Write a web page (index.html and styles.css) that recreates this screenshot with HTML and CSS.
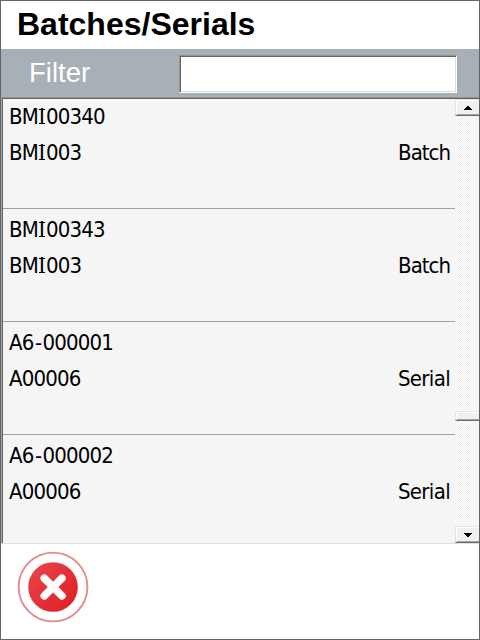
FILE: index.html
```html
<!DOCTYPE html>
<html lang="en">
<head>
<meta charset="utf-8">
<title>Batches/Serials</title>
<link rel="stylesheet" href="styles.css">
</head>
<body>
<main class="window">
  <h1 class="title">Batches/Serials</h1>
  <div class="filter">
    <label class="filter-label" for="filter">Filter</label>
    <input class="filter-input" id="filter" type="text">
  </div>
  <section class="list">
    <div class="rows">
      <article class="row">
        <div class="code">BM<span class="cap-i">I</span>00340</div>
        <div class="line"><span>BM<span class="cap-i">I</span>003</span><span class="kind batch">Batch</span></div>
      </article>
      <article class="row">
        <div class="code">BM<span class="cap-i">I</span>00343</div>
        <div class="line"><span>BM<span class="cap-i">I</span>003</span><span class="kind batch">Batch</span></div>
      </article>
      <article class="row">
        <div class="code">A6<span class="dash">-</span>000001</div>
        <div class="line"><span>A00006</span><span class="kind">Serial</span></div>
      </article>
      <article class="row">
        <div class="code">A6<span class="dash">-</span>000002</div>
        <div class="line"><span>A00006</span><span class="kind">Serial</span></div>
      </article>
    </div>
    <div class="scrollbar">
      <div class="arrow"><svg width="8" height="4" viewBox="0 0 8 4" shape-rendering="crispEdges"><path d="M3 0h2v1h1v1h1v1h1v1H0V3h1V2h1V1h1z"/></svg></div>
      <div class="track-above"></div>
      <div class="thumb"></div>
      <div class="track-below"></div>
      <div class="arrow"><svg width="8" height="4" viewBox="0 0 8 4" shape-rendering="crispEdges"><path d="M0 0h8v1H7v1H6v1H5v1H3V3H2V2H1V1H0z"/></svg></div>
    </div>
  </section>
  <footer class="actions">
    <button class="cancel" aria-label="Cancel">
      <svg width="72" height="72" viewBox="0 0 72 72">
        <defs>
          <linearGradient id="red" x1="0" y1="0" x2="1" y2="1">
            <stop offset="0" stop-color="#e9484b"/>
            <stop offset="1" stop-color="#de1b24"/>
          </linearGradient>
        </defs>
        <circle cx="36" cy="36" r="34.4" fill="#fff" stroke="#e48a8e" stroke-width="1.9"/>
        <circle cx="36" cy="36" r="24.8" fill="url(#red)"/>
        <path d="M27.3 27.3 44.9 44.9M44.9 27.3 27.3 44.9" stroke="#fff" stroke-width="7.6" stroke-linecap="round"/>
      </svg>
    </button>
  </footer>
</main>
</body>
</html>
```

FILE: styles.css
```css
* { box-sizing: border-box; }
body { margin: 0; background: #fff; }
.window {
  display: flex;
  flex-direction: column;
  width: 480px;
  height: 640px;
  border: 1px solid #656365;
  background: #fff;
  overflow: hidden;
}
.title {
  height: 48px;
  margin: 0;
  padding-left: 16px;
  font: bold 32px/46px "Liberation Sans", Arial, sans-serif;
  color: #000;
}
.filter {
  display: flex;
  align-items: flex-start;
  height: 48px;
  padding: 6px 22px 0 28px;
  background: #a7b0b7;
}
.filter-label {
  flex: 1;
  font: 27.5px/35px "Liberation Sans", Arial, sans-serif;
  color: #fff;
}
.filter-input {
  width: 278px;
  height: 38px;
  padding: 0 4px;
  border: 1px solid;
  border-color: #8f9193 #fff #fff #8f9193;
  border-radius: 0;
  outline: 0;
  background: #fff;
  box-shadow: inset 1px 1px #656565, inset -1px -1px #d9dfe1;
  font: 22px "Liberation Sans", Arial, sans-serif;
}
.list {
  display: flex;
  height: 447px;
  border: solid;
  border-width: 1px 0 1px 1px;
  border-color: #8d9295 #fff #e0e0e0 #a3a3a3;
  box-shadow: inset 1px 1px #656565;
  padding: 1px 0 0 1px;
  background: #f5f5f5;
}
.rows {
  flex: 1;
  font: 22px/36px "DejaVu Sans Condensed", Tahoma, sans-serif;
  letter-spacing: -0.85px;
  color: #000;
}
.row {
  height: 113px;
  padding: 3px 5px 0 6px;
  border-bottom: 1px solid #a2a2a2;
}
.row:first-child { height: 110px; padding-top: 0; }
.row:last-child { height: 108px; border-bottom: 0; }
.line { display: flex; justify-content: space-between; }
.kind { letter-spacing: -0.65px; }
.batch { letter-spacing: -1px; }
.dash { margin: 0 1.3px 0 1.5px; }
.cap-i {
  display: inline-block;
  width: 8px;
  line-height: 26px;
  text-align: center;
  letter-spacing: 0;
  background:
    linear-gradient(#000, #000) 1px 5px / 6px 1px no-repeat,
    linear-gradient(#000, #000) 1px 19px / 6px 1px no-repeat;
}
.scrollbar {
  display: flex;
  flex-direction: column;
  width: 24px;
  background: repeating-conic-gradient(#fff 0 25%, #efefef 0 50%) 0 0 / 2px 2px;
}
.arrow {
  display: flex;
  align-items: center;
  justify-content: center;
  height: 17px;
}
.arrow, .thumb {
  border: 1px solid;
  border-color: #e3e3e3 #f0f0f0 #6c6c6c #e3e3e3;
  border-right: 0;
  background: #f0f0f0;
  box-shadow: inset 1px 1px #fff, inset 0 -1px #a5a5a5;
}
.track-above { height: 295px; }
.thumb { height: 10px; }
.track-below { flex: 1; }
.actions { padding: 7px 0 0 16px; }
.cancel {
  display: block;
  width: 72px;
  height: 72px;
  padding: 0;
  border: 0;
  background: none;
}
```
